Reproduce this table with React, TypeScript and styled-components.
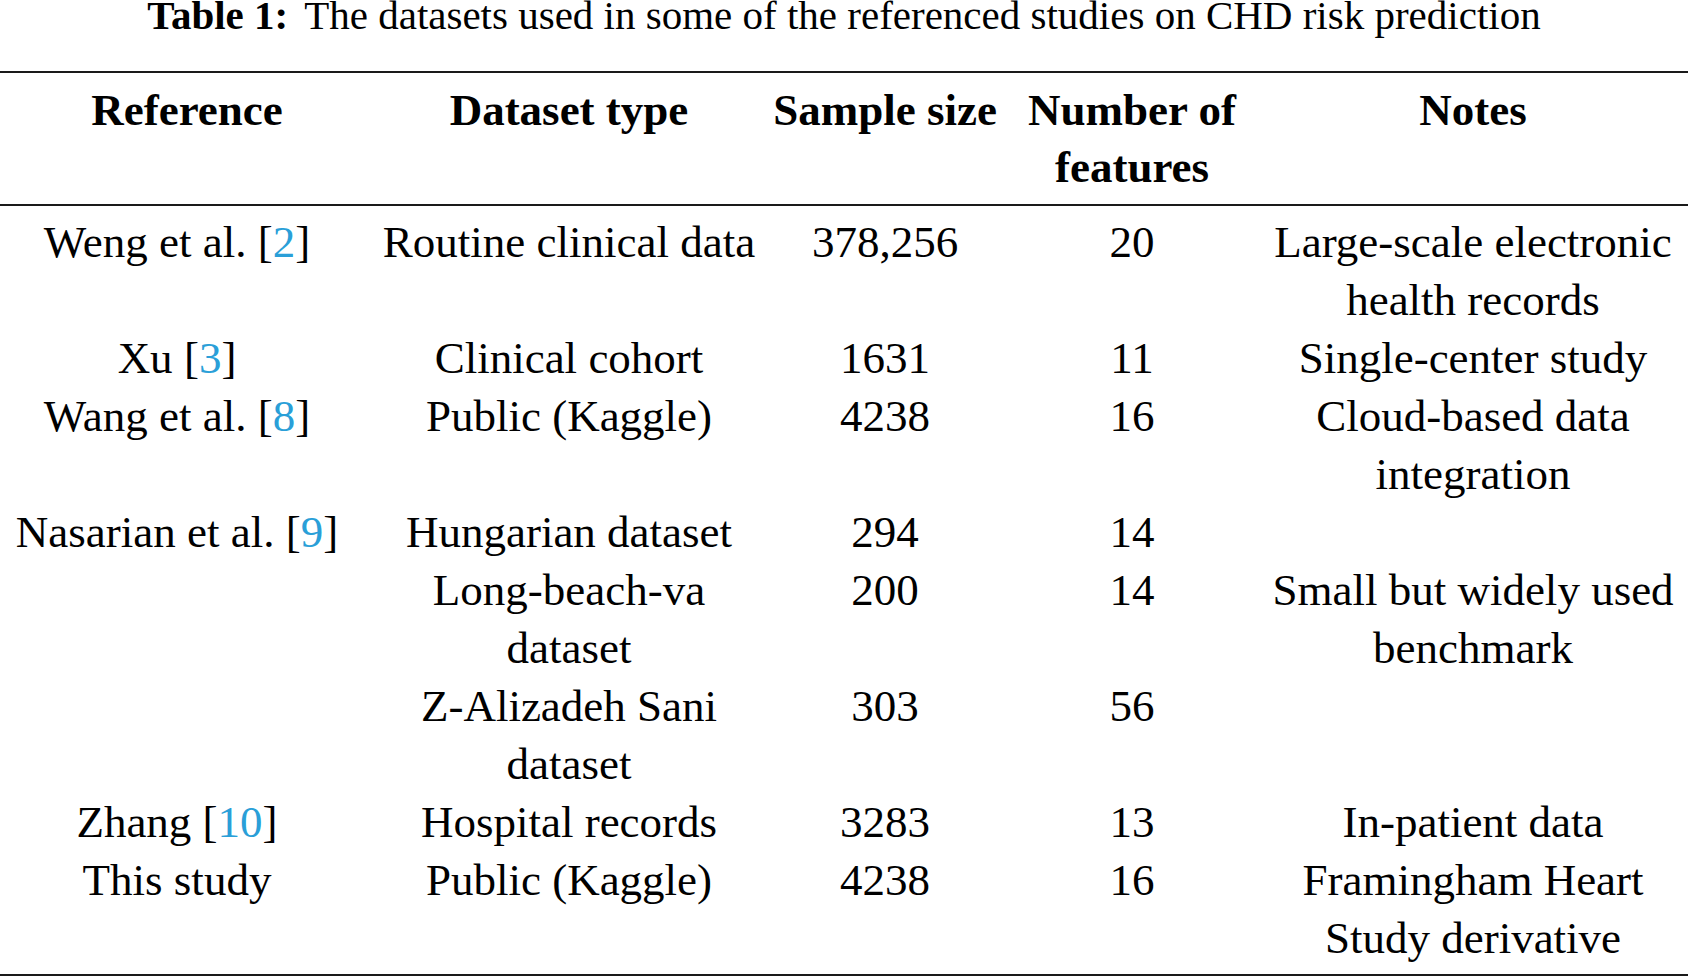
import React from "react";
import styled, { createGlobalStyle } from "styled-components";

const GlobalStyle = createGlobalStyle`
  html, body {
    margin: 0;
    padding: 0;
    background: #ffffff;
  }
  body {
    font-family: "Liberation Serif", "Times New Roman", serif;
    color: #000000;
  }
`;

const Page = styled.div`
  width: 1688px;
  height: 976px;
  overflow: hidden;
  background: #ffffff;
`;

const Caption = styled.div`
  height: 31px;
  font-size: 41px;
  line-height: 31px;
  text-align: center;
  white-space: nowrap;
`;

const CaptionLabel = styled.span`
  font-weight: bold;
  margin-right: 16px;
`;

const Table = styled.div`
  margin-top: 40px;
  border-top: 2px solid #1a1a1a;
  border-bottom: 2px solid #1a1a1a;
`;

const Head = styled.div`
  display: grid;
  grid-template-columns: 354px 430px 202px 292px 390px 1fr;
  padding: 9px 0 8px;
  border-bottom: 2px solid #1a1a1a;
  font-weight: bold;
  font-size: 45px;
  line-height: 57px;
`;

const Body = styled.div`
  padding: 7px 0 7px;
  font-size: 45px;
  line-height: 58px;
`;

const Row = styled.div`
  display: grid;
  grid-template-columns: 354px 430px 202px 292px 390px 1fr;
`;

const Cell = styled.div<{ $shift?: number }>`
  display: flex;
  flex-direction: column;
  align-items: center;
  white-space: nowrap;
  padding-left: ${(p) => (p.$shift ? p.$shift * 2 : 0)}px;
`;

const Cite = styled.span`
  color: #2a9fd8;
`;

type Ref = { name: string; cite?: string };

type Entry = {
  ref?: Ref;
  type: string[];
  size: string;
  features: string;
  notes: string[];
};

const rows: Entry[] = [
  {
    ref: { name: "Weng et al.", cite: "2" },
    type: ["Routine clinical data"],
    size: "378,256",
    features: "20",
    notes: ["Large-scale electronic", "health records"],
  },
  {
    ref: { name: "Xu", cite: "3" },
    type: ["Clinical cohort"],
    size: "1631",
    features: "11",
    notes: ["Single-center study"],
  },
  {
    ref: { name: "Wang et al.", cite: "8" },
    type: ["Public (Kaggle)"],
    size: "4238",
    features: "16",
    notes: ["Cloud-based data", "integration"],
  },
  {
    ref: { name: "Nasarian et al.", cite: "9" },
    type: ["Hungarian dataset"],
    size: "294",
    features: "14",
    notes: [],
  },
  {
    type: ["Long-beach-va", "dataset"],
    size: "200",
    features: "14",
    notes: ["Small but widely used", "benchmark"],
  },
  {
    type: ["Z-Alizadeh Sani", "dataset"],
    size: "303",
    features: "56",
    notes: [],
  },
  {
    ref: { name: "Zhang", cite: "10" },
    type: ["Hospital records"],
    size: "3283",
    features: "13",
    notes: ["In-patient data"],
  },
  {
    ref: { name: "This study" },
    type: ["Public (Kaggle)"],
    size: "4238",
    features: "16",
    notes: ["Framingham Heart", "Study derivative"],
  },
];

const Lines: React.FC<{ lines: string[] }> = ({ lines }) => (
  <Cell>
    {lines.map((l) => (
      <span key={l}>{l}</span>
    ))}
  </Cell>
);

const App: React.FC = () => {
  return (
    <Page>
      <GlobalStyle />
      <Caption>
        <CaptionLabel>Table 1:</CaptionLabel>
        The datasets used in some of the referenced studies on CHD risk prediction
      </Caption>
      <Table>
        <Head>
          <Cell $shift={10}>Reference</Cell>
          <Cell>Dataset type</Cell>
          <Cell>Sample size</Cell>
          <Cell>
            <span>Number of</span>
            <span>features</span>
          </Cell>
          <Cell>Notes</Cell>
        </Head>
        <Body>
          {rows.map((r, i) => (
            <Row key={i}>
              <Cell>
                {r.ref && (
                  <span>
                    {r.ref.name}
                    {r.ref.cite && (
                      <>
                        {" "}[<Cite>{r.ref.cite}</Cite>]
                      </>
                    )}
                  </span>
                )}
              </Cell>
              <Lines lines={r.type} />
              <Cell>{r.size}</Cell>
              <Cell>{r.features}</Cell>
              <Lines lines={r.notes} />
            </Row>
          ))}
        </Body>
      </Table>
    </Page>
  );
};

export default App;
